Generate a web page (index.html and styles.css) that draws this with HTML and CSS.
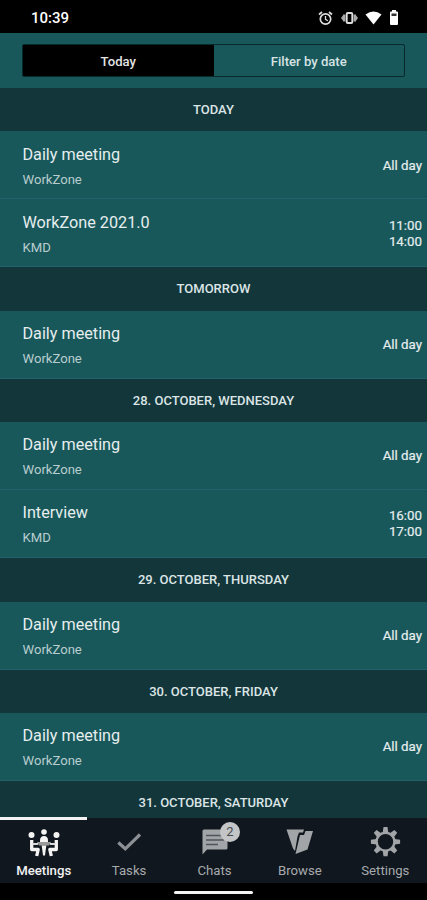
FILE: index.html
```
<!DOCTYPE html>
<html lang="en">
<head>
<meta charset="utf-8">
<title>Meetings</title>
<link rel="stylesheet" href="styles.css">
</head>
<body>
<div class="phone">
  <header class="status">
    <span class="clock">10:39</span>
    <div class="status-icons">
      <svg width="15" height="16" viewBox="0 0 15 16" fill="none" stroke="#ddd"><circle cx="7.5" cy="9" r="5.2" stroke-width="1.7"/><path d="M7.5 6v3.3l2.3 1.4" stroke-width="1.3"/><path d="M1 4.5 4 2M14 4.5 11 2" stroke-width="1.8"/></svg>
      <svg width="17" height="14" viewBox="0 0 17 14"><path d="M0 7 3 3v8zM17 7l-3-4v8z" fill="#aaa"/><path d="M3.500 3.500v7M13.500 3.500v7" stroke="#aaa" stroke-width="1.800"/><rect x="5.700" y="2" width="5.600" height="10" rx="1" fill="none" stroke="#ddd" stroke-width="1.900"/></svg>
      <svg width="17" height="14" viewBox="0 0 17 14"><path d="M.5 3.500Q8.500-2.500 16.500 3.500L8.500 13.500z" fill="#fff"/></svg>
      <svg width="10" height="15" viewBox="0 0 10 15"><path d="M3 0h4v1.500h1q1 0 1 1V14q0 1-1 1H2q-1 0-1-1V2.500q0-1 1-1h1z" fill="#fff"/><path d="M2.500 3.500h5v2.500h-5z" fill="#333"/></svg>
    </div>
  </header>
  <div class="filter">
    <div class="segments">
      <div class="segment selected">Today</div>
      <div class="segment">Filter by date</div>
    </div>
  </div>
  <main class="agenda">
    <h2 class="day">TODAY</h2>
    <div class="event"><div class="info"><div class="title">Daily meeting</div><div class="place">WorkZone</div></div><div class="time">All day</div></div>
    <div class="event"><div class="info"><div class="title">WorkZone 2021.0</div><div class="place">KMD</div></div><div class="time">11:00<br>14:00</div></div>
    <h2 class="day">TOMORROW</h2>
    <div class="event"><div class="info"><div class="title">Daily meeting</div><div class="place">WorkZone</div></div><div class="time">All day</div></div>
    <h2 class="day">28. OCTOBER, WEDNESDAY</h2>
    <div class="event"><div class="info"><div class="title">Daily meeting</div><div class="place">WorkZone</div></div><div class="time">All day</div></div>
    <div class="event"><div class="info"><div class="title">Interview</div><div class="place">KMD</div></div><div class="time">16:00<br>17:00</div></div>
    <h2 class="day">29. OCTOBER, THURSDAY</h2>
    <div class="event"><div class="info"><div class="title">Daily meeting</div><div class="place">WorkZone</div></div><div class="time">All day</div></div>
    <h2 class="day">30. OCTOBER, FRIDAY</h2>
    <div class="event"><div class="info"><div class="title">Daily meeting</div><div class="place">WorkZone</div></div><div class="time">All day</div></div>
    <h2 class="day">31. OCTOBER, SATURDAY</h2>
  </main>
  <nav class="tabs">
    <div class="tab active">
      <svg width="32" height="32" viewBox="0 0 32 32" fill="#f4f4f4"><circle cx="3.500" cy="9" r="3"/><circle cx="28.500" cy="9" r="3"/><circle cx="16" cy="6" r="2.800"/><path d="M12 14.500q0-4.500 4-4.500t4 4.500v1.500h-8z"/><path d="M9 16h14l-2 3.500H11z" fill="#999"/><path d="M13.700 19.500h4.600L17 29.500h-2z"/><path d="M3.700 14v9.500h6.500l-1.500 6.500M28.300 14v9.500h-6.500l1.500 6.500" fill="none" stroke="#f4f4f4" stroke-width="3.300" stroke-linejoin="round"/><path d="M4.500 18H10M27.500 18H22" stroke="#d8d8d8" stroke-width="2"/></svg>
      <span>Meetings</span>
    </div>
    <div class="tab">
      <svg width="32" height="32" viewBox="0 0 32 32"><path d="m5.300 16.500 7 6.300L27 8.500" fill="none" stroke="#8c9094" stroke-width="3.200"/></svg>
      <span>Tasks</span>
    </div>
    <div class="tab">
      <svg width="32" height="32" viewBox="0 0 32 32"><path d="M5 3.500h22q1.500 0 1.500 1.500v17q0 1.500-1.500 1.500H8l-4.500 5V5Q3.500 3.500 5 3.500z" fill="#a2a5a7"/><path d="M7 9.500h18M7 14h18M7 18.500h12" stroke="#4f555a" stroke-width="1.600"/></svg>
      <b class="badge">2</b>
      <span>Chats</span>
    </div>
    <div class="tab">
      <svg width="32" height="32" viewBox="0 0 32 32" fill="#a2a5a7"><path d="M2.500 3.500H20l-1 3h-4L13.500 10.500 11 25 9 22.500z"/><path d="M16 9h4l1.500-4H29L23.500 23.500 11.500 28z"/></svg>
      <span>Browse</span>
    </div>
    <div class="tab">
      <svg width="32" height="32" viewBox="-16.500 -15.700 32 32"><g fill="#a2a5a7"><path id="tooth" d="M-2.800-9-2-14.600h4l.8 5.600z"/><use href="#tooth" transform="rotate(45)"/><use href="#tooth" transform="rotate(90)"/><use href="#tooth" transform="rotate(135)"/><use href="#tooth" transform="rotate(180)"/><use href="#tooth" transform="rotate(225)"/><use href="#tooth" transform="rotate(270)"/><use href="#tooth" transform="rotate(315)"/></g><circle r="8.900" fill="#10171e" stroke="#a2a5a7" stroke-width="2.400"/></svg>
      <span>Settings</span>
    </div>
  </nav>
  <footer class="gesture"><div class="handle"></div></footer>
</div>
</body>
</html>
```
FILE: styles.css
```
* { box-sizing: border-box; }
body { margin: 0; background: #000; font-family: Roboto, sans-serif; }
.phone { width: 427px; height: 900px; display: flex; flex-direction: column; overflow: hidden; color: #e6eeee; }
.status { height: 32.5px; flex: none; display: flex; justify-content: space-between; align-items: center; padding: 3px 28px 0 31px; background: #000; }
.clock { font: 500 15px/18px Roboto, sans-serif; color: #fff; }
.status-icons { display: flex; align-items: center; gap: 7px; }
.status-icons svg:first-child { margin-right: 1px; }
.filter { height: 55.5px; flex: none; padding: 11.5px 22px 11px; background: #18585b; }
.segments { height: 33px; display: flex; border: 1px solid #06292d; border-radius: 2px; }
.segment { flex: 1; font-size: 13.1px; line-height: 33px; font-weight: 500; text-align: center; color: #d5e3e3; }
.selected { background: #000; color: #e4e4e4; }
.agenda { flex: 1; min-height: 0; overflow: hidden; background: #13363b; }
.day { margin: 0; height: 43.4px; font-size: 13px; line-height: 44px; font-weight: 500; text-align: center; background: #13363b; color: #dce5e6; }
.event { height: 68px; display: flex; justify-content: space-between; align-items: center; padding: 0 5px 0 22.5px; background: #18585b; border-bottom: 1px solid #21616a; }
.info { padding-top: 2.4px; }
.title { font-size: 16.2px; line-height: 22px; }
.place { margin-top: 5px; font-size: 13.1px; line-height: 18px; color: #b9cdce; }
.time { padding-top: 1.6px; font-size: 13.3px; line-height: 16px; text-align: right; -webkit-text-stroke: .2px; }
.tabs { height: 65px; flex: none; display: flex; padding-left: 1px; margin-right: -1px; background: #10171e; }
.tab { position: relative; flex: 1; display: flex; flex-direction: column; align-items: center; padding-top: 8px; color: #a7aaad; font-size: 13.2px; }
.tab svg { height: 32px; }
.tab span { margin-top: 4px; line-height: 17px; }
.active { color: #f2f2f2; font-weight: 500; }
.active::before { content: ""; position: absolute; left: -1px; top: -1px; width: 87px; height: 3px; background: #f2f2f2; }
.badge { position: absolute; left: 48px; top: 4px; width: 20px; height: 20px; border-radius: 50%; background: #c3c5c6; color: #474b4f; font-size: 13px; font-weight: 400; line-height: 20px; text-align: center; }
.gesture { height: 17px; flex: none; display: flex; justify-content: center; padding-top: 8px; background: #000; }
.handle { width: 79px; height: 3px; border-radius: 2px; background: #f4f4f4; }
```
